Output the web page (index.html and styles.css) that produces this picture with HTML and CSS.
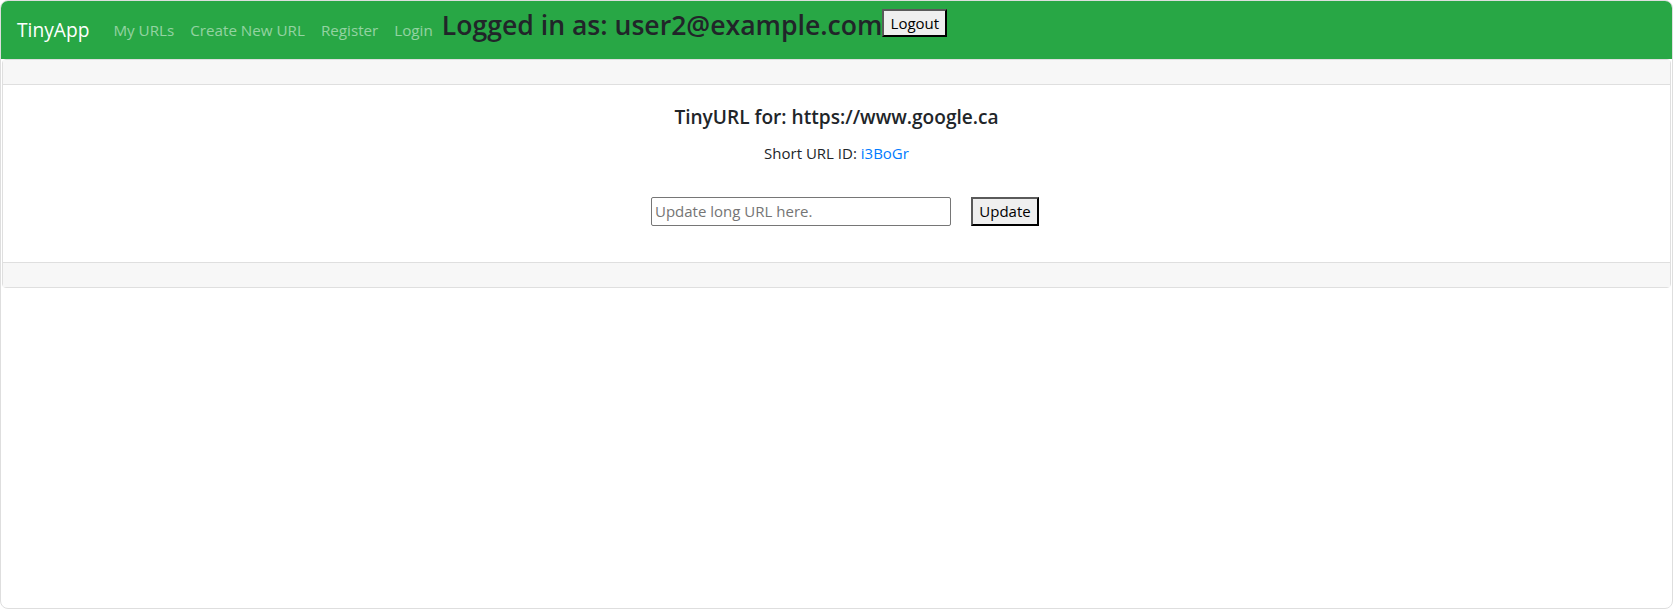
FILE: index.html
```html
<!DOCTYPE html>
<html lang="en">
<head>
<meta charset="utf-8">
<title>TinyApp</title>
<link rel="stylesheet" href="styles.css">
</head>
<body>
<div class="window">
  <nav class="navbar">
    <a class="brand" href="#">TinyApp</a>
    <ul class="nav">
      <li><a class="nav-link" href="#">My URLs</a></li>
      <li><a class="nav-link" href="#">Create New URL</a></li>
      <li><a class="nav-link" href="#">Register</a></li>
      <li><a class="nav-link" href="#">Login</a></li>
    </ul>
    <div class="user">
      <h3 class="user-title">Logged in as: user2@example.com</h3>
      <form class="logout-form"><button class="btn-plain btn-logout" type="button">Logout</button></form>
    </div>
  </nav>
  <div class="card">
    <div class="card-header"></div>
    <div class="card-body">
      <h5 class="card-title">TinyURL for: https://www.google.ca</h5>
      <p class="card-text">Short URL ID: <a class="short-link" href="#">i3BoGr</a></p>
      <form class="update-form">
        <input class="url-input" type="text" placeholder="Update long URL here.">
        <button class="btn-plain btn-update" type="button">Update</button>
      </form>
    </div>
    <div class="card-footer"></div>
  </div>
</div>
</body>
</html>
```

FILE: styles.css
```css
* { box-sizing: border-box; }
html, body { margin: 0; padding: 0; background: #fff; }
body {
  font-family: "Open Sans", "Noto Sans", sans-serif;
  color: #212529;
}
.window {
  width: 1673px;
  height: 609px;
  border: 1px solid #dedede;
  border-radius: 8px;
  overflow: hidden;
  background: #fff;
}
.navbar {
  display: flex;
  align-items: center;
  padding: 8px 16px;
  background: #28a745;
}
.brand {
  color: #fff;
  text-decoration: none;
  font-size: 19.2px;
  line-height: 30px;
  margin-right: 16px;
}
.nav {
  display: flex;
  list-style: none;
  margin: 0;
  padding: 0;
}
.nav-link {
  display: block;
  padding: 0 8px;
  color: rgba(255, 255, 255, 0.5);
  text-decoration: none;
  font-size: 15.2px;
  line-height: 24px;
}
.user {
  display: flex;
  align-items: flex-start;
  align-self: flex-start;
  margin-left: 1px;
}
.user-title {
  margin: 0 0 8px 0;
  font-size: 26.6px;
  line-height: 33.6px;
  font-weight: 600;
  color: #212529;
}
.logout-form { margin: 0; }
.btn-plain {
  font-family: inherit;
  color: #000;
  background: #efefef;
  border-style: solid;
  border-width: 2px;
  border-color: #5a5a5a #000 #000 #5a5a5a;
  border-radius: 0;
  padding: 0 6px;
  margin: 0;
}
.btn-logout {
  height: 28px;
  width: 65px;
  font-size: 15px;
  line-height: 22px;
}
.card {
  margin: 0 1px;
  border: 1px solid #dfdfdf;
  border-radius: 4px;
  text-align: center;
}
.card-header {
  height: 25px;
  background: #f7f7f7;
  border-bottom: 1px solid #dfdfdf;
}
.card-body { padding: 20px; }
.card-title {
  margin: 0 0 12px;
  font-size: 19.1px;
  line-height: 24px;
  font-weight: 600;
  color: #212529;
}
.card-text {
  margin: 0 0 16px;
  font-size: 15px;
  line-height: 24px;
}
.short-link { color: #007bff; text-decoration: none; }
.update-form {
  display: flex;
  justify-content: center;
  gap: 20px;
  padding: 16px 0 16px 17px;
  margin: 0;
}
.url-input {
  width: 300px;
  height: 29px;
  border: 1px solid #767676;
  border-radius: 2px;
  padding: 1px 3px;
  font-family: inherit;
  font-size: 15px;
  color: #212529;
  margin: 0;
}
.url-input::placeholder { color: #757575; }
.btn-update {
  width: 68px;
  height: 29px;
  font-size: 15px;
  line-height: 23px;
}
.card-footer {
  height: 25px;
  background: #f7f7f7;
  border-top: 1px solid #dfdfdf;
}
```
